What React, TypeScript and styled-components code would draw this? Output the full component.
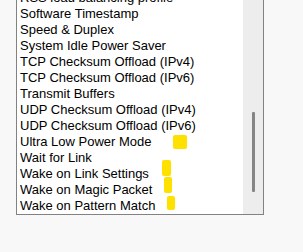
import React from 'react'
import styled, { createGlobalStyle } from 'styled-components'

const GlobalStyle = createGlobalStyle`
  html, body {
    margin: 0;
    padding: 0;
    background: #f8f8f8;
  }
  body {
    font-family: "Liberation Sans", Arial, sans-serif;
    overflow: hidden;
  }
`

const Page = styled.div`
  width: 303px;
  height: 252px;
  padding-left: 16px;
  box-sizing: border-box;
  background: #f8f8f8;
`

const ListBox = styled.div`
  display: flex;
  flex-direction: row;
  width: 248px;
  height: 215px;
  box-sizing: border-box;
  border: 1px solid #828282;
  border-top: 0;
  background: #fff;
  overflow: hidden;
`

const Items = styled.ul`
  flex: 1;
  list-style: none;
  margin: -10px 0 0 0;
  padding: 0 0 0 3px;
`

const Item = styled.li`
  position: relative;
  height: 16px;
  line-height: 16px;
  font-size: 13px;
  color: #000;
  white-space: nowrap;
`

const Mark = styled.span`
  position: absolute;
  background: #ffe100;
  border-radius: 2px;
`

const Track = styled.div`
  width: 20px;
  background: #ededed;
  display: flex;
  justify-content: center;
  padding-top: 112px;
  box-sizing: border-box;
`

const Thumb = styled.div`
  width: 3px;
  height: 80px;
  margin-left: 1px;
  background: #858585;
  border-radius: 1px;
`

type Highlight = { left: number; top: number; width: number; height: number }

const items: { label: string; mark?: Highlight }[] = [
  { label: 'RSS load balancing profile' },
  { label: 'Software Timestamp' },
  { label: 'Speed & Duplex' },
  { label: 'System Idle Power Saver' },
  { label: 'TCP Checksum Offload (IPv4)' },
  { label: 'TCP Checksum Offload (IPv6)' },
  { label: 'Transmit Buffers' },
  { label: 'UDP Checksum Offload (IPv4)' },
  { label: 'UDP Checksum Offload (IPv6)' },
  { label: 'Ultra Low Power Mode', mark: { left: 153, top: 1, width: 14, height: 14 } },
  { label: 'Wait for Link' },
  { label: 'Wake on Link Settings', mark: { left: 142, top: -6, width: 9, height: 16 } },
  { label: 'Wake on Magic Packet', mark: { left: 144, top: -5, width: 8, height: 16 } },
  { label: 'Wake on Pattern Match', mark: { left: 147, top: -2, width: 8, height: 14 } },
]

export default function App() {
  return (
    <Page>
      <GlobalStyle />
      <ListBox>
        <Items>
          {items.map(item => (
            <Item key={item.label}>
              {item.label}
              {item.mark && <Mark style={item.mark} />}
            </Item>
          ))}
        </Items>
        <Track>
          <Thumb />
        </Track>
      </ListBox>
    </Page>
  )
}
